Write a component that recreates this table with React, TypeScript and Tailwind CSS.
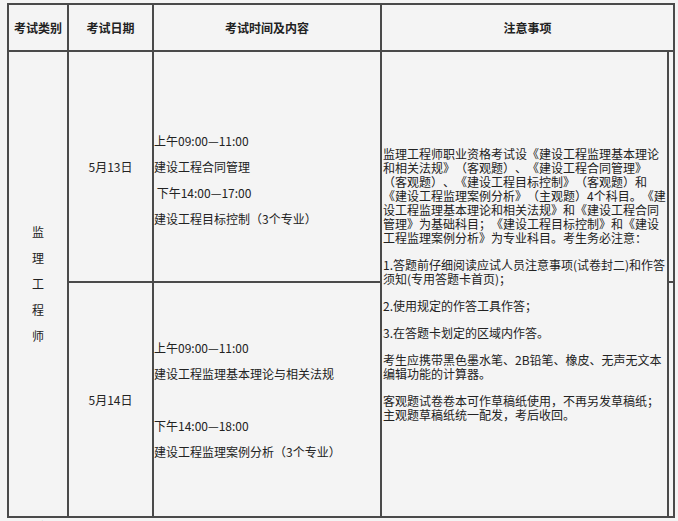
export default function App() {
  const cell = 'border-2 border-[#4a4a4a] p-0';
  return (
    <div className="min-h-screen bg-[#f4f4f4] pt-[3px] pl-[7px] text-[12px] text-[#222] font-[family-name:Noto_Sans_CJK_SC,sans-serif] [text-spacing-trim:space-all]">
      <table className="table-fixed border-collapse w-[666px]">
        <colgroup>
          <col className="w-[60px]" />
          <col className="w-[85px]" />
          <col className="w-[228px]" />
          <col className="w-[287px]" />
          <col className="w-[6px]" />
        </colgroup>
        <thead>
          <tr className="h-[47px]">
            <th className={`${cell} text-center font-semibold`}>考试类别</th>
            <th className={`${cell} text-center font-semibold`}>考试日期</th>
            <th className={`${cell} text-center font-semibold`}>考试时间及内容</th>
            <th colSpan={2} className={`${cell} text-center font-semibold`}>注意事项</th>
          </tr>
        </thead>
        <tbody>
          <tr className="h-[231px]">
            <td rowSpan={2} className={`${cell} text-center align-middle leading-[26px]`}>
              <div>监</div>
              <div>理</div>
              <div>工</div>
              <div>程</div>
              <div>师</div>
            </td>
            <td className={`${cell} text-center align-middle`}>5月13日</td>
            <td className={`${cell} align-middle leading-[26px]`}>
              <div>&nbsp;</div>
              <div>上午09:00—11:00</div>
              <div>建设工程合同管理</div>
              <div>&nbsp;下午14:00—17:00</div>
              <div>建设工程目标控制（3个专业）</div>
            </td>
            <td rowSpan={2} className={`${cell} align-middle leading-[14px] pl-px`}>
              <div className="flex flex-col gap-[13px]">
                <p>
                  监理工程师职业资格考试设《建设工程监理基本理论和相关法规》（客观题）、《建设工程合同管理》（客观题）、《建设工程目标控制》（客观题）和《建设工程监理案例分析》（主观题）4个科目。《建设工程监理基本理论和相关法规》和《建设工程合同管理》为基础科目；《建设工程目标控制》和《建设工程监理案例分析》为专业科目。考生务必注意：
                </p>
                <p>1.答题前仔细阅读应试人员注意事项(试卷封二)和作答须知(专用答题卡首页)；</p>
                <p>2.使用规定的作答工具作答；</p>
                <p>3.在答题卡划定的区域内作答。</p>
                <p>考生应携带黑色墨水笔、2B铅笔、橡皮、无声无文本编辑功能的计算器。</p>
                <p>
                  客观题试卷卷本可作草稿纸使用，不再另发草稿纸；
                  <br />
                  主观题草稿纸统一配发，考后收回。
                </p>
              </div>
            </td>
            <td className={`${cell} w-[6px]`}></td>
          </tr>
          <tr className="h-[235px]">
            <td className={`${cell} text-center align-middle`}>5月14日</td>
            <td className={`${cell} align-middle leading-[26px]`}>
              <div>上午09:00—11:00</div>
              <div>建设工程监理基本理论与相关法规</div>
              <div>&nbsp;</div>
              <div>下午14:00—18:00</div>
              <div>建设工程监理案例分析（3个专业）</div>
            </td>
            <td className={`${cell} w-[6px]`}></td>
          </tr>
        </tbody>
      </table>
      <div className="pl-[5px] pt-[1px] font-semibold leading-[16px]">相关文件：</div>
    </div>
  );
}
